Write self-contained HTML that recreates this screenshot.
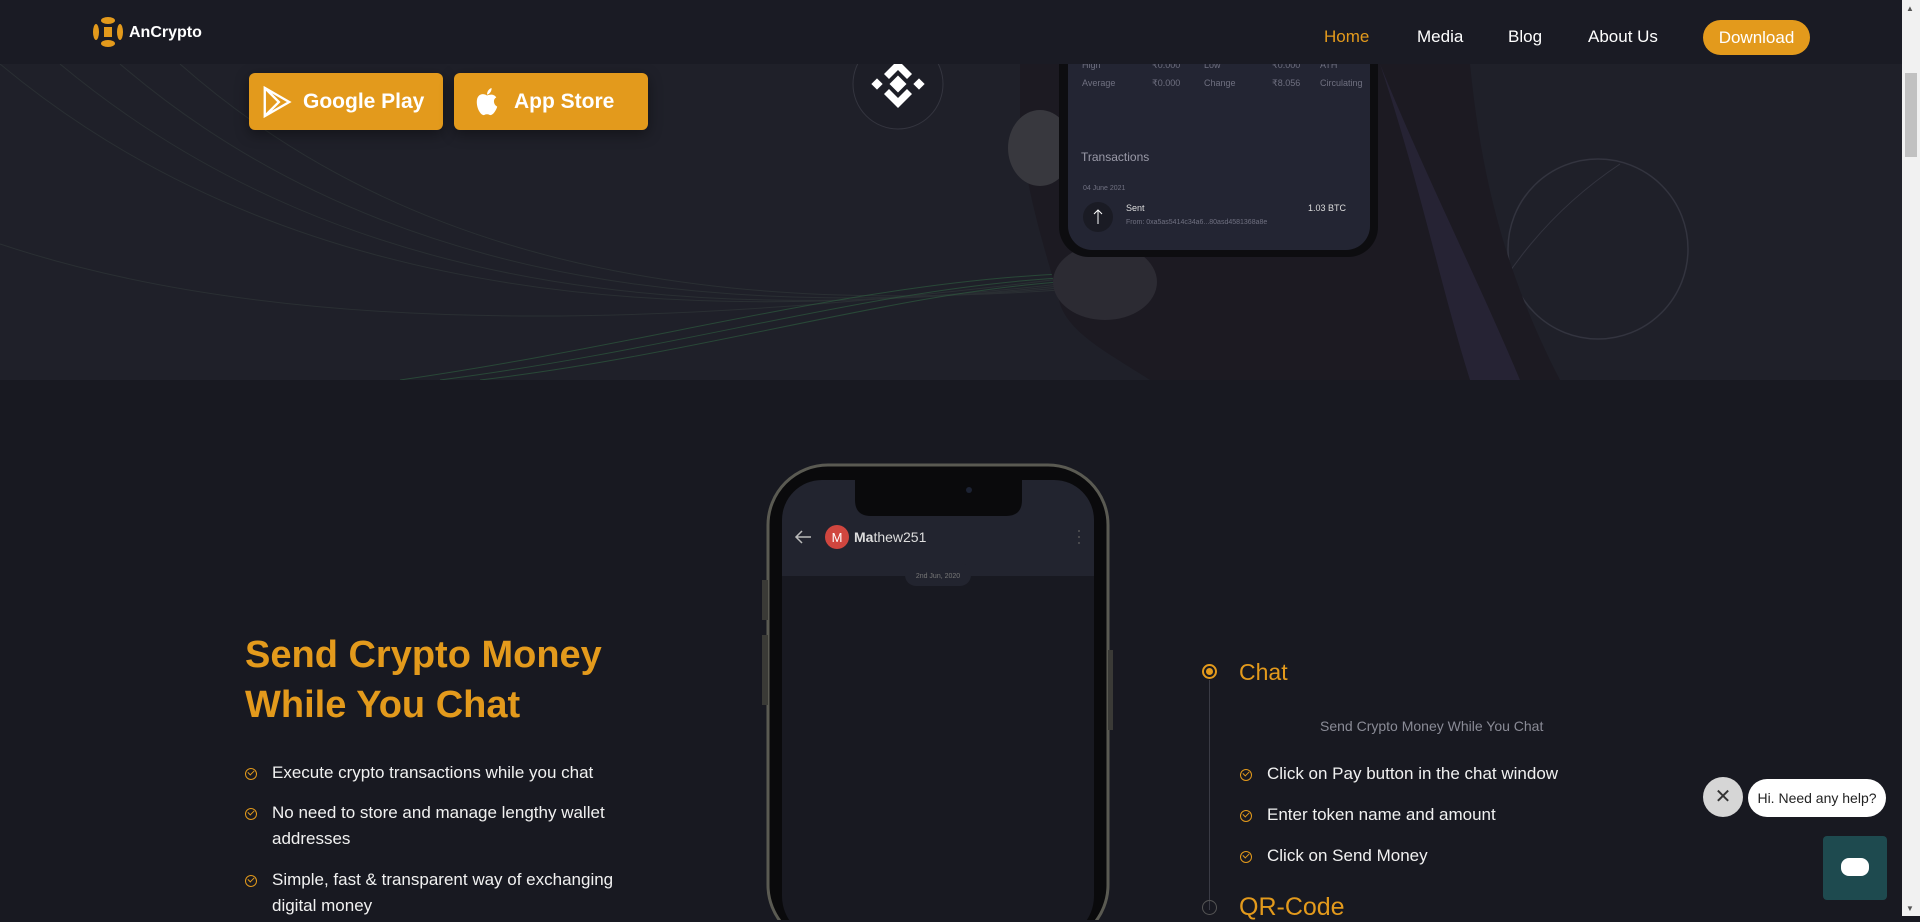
<!DOCTYPE html>
<html><head><meta charset="utf-8">
<style>
*{margin:0;padding:0;box-sizing:border-box}
html,body{width:1920px;height:916px;overflow:hidden;background:#181921;font-family:"Liberation Sans",sans-serif;color:#fff}
.abs{position:absolute}
#nav{position:absolute;left:0;top:0;width:1902px;height:64px;background:#1a1b24;z-index:5}
#hero{position:absolute;left:0;top:64px;width:1902px;height:316px;background:#1f2029;overflow:hidden}
.nl{position:absolute;top:27px;font-size:17px;color:#fff}
.btn{position:absolute;top:9px;height:57px;background:#e39a1c;border-radius:6px;box-shadow:0 4px 14px rgba(0,0,0,.4);font-size:21px;font-weight:bold;display:flex;align-items:center;padding-left:12px}
.li{position:absolute;font-size:17px;color:#f1f1f1;line-height:26px}
.chk{position:absolute;width:12px;height:12px;border:1.6px solid #e39a1c;border-radius:50%}
.chk:after{content:"";position:absolute;left:2px;top:1px;width:5px;height:3px;border-left:1.5px solid #e39a1c;border-bottom:1.5px solid #e39a1c;transform:rotate(-45deg)}
</style></head><body>
<div id="nav">
  <svg class="abs" style="left:93px;top:17px" width="30" height="30" viewBox="0 0 30 30">
    <ellipse cx="15" cy="3.5" rx="7" ry="3.5" fill="#e39a1c"/><ellipse cx="15" cy="26.5" rx="7" ry="3.5" fill="#e39a1c"/>
    <ellipse cx="3" cy="15" rx="3" ry="8" fill="#e39a1c"/><ellipse cx="27" cy="15" rx="3" ry="8" fill="#e39a1c"/>
    <rect x="11" y="10" width="8" height="10" fill="#e39a1c"/></svg>
  <div class="abs" style="left:129px;top:24px;font-size:16px;font-weight:bold">AnCrypto</div>
  <div class="nl" style="left:1324px;color:#e39a1c">Home</div>
  <div class="nl" style="left:1417px">Media</div>
  <div class="nl" style="left:1508px">Blog</div>
  <div class="nl" style="left:1588px">About Us</div>
  <div class="abs" style="left:1703px;top:20px;width:107px;height:35px;border-radius:18px;background:#e39a1c;font-size:17px;text-align:center;line-height:35px">Download</div>
</div>
<div id="hero">
  <svg class="abs" style="left:0;top:0" width="1902" height="316">
    <g fill="none" stroke="#2a2f33" stroke-width="1">
      <path d="M0 0 C300 250 700 260 1060 220"/><path d="M60 0 C360 250 740 255 1060 222"/>
      <path d="M120 0 C400 240 760 250 1060 224"/><path d="M180 0 C440 230 780 245 1060 226"/>
      <path d="M0 180 C300 280 700 260 1060 215"/>
    </g>
    <g fill="none" stroke="#2d5a3e" stroke-width="1" opacity=".7">
      <path d="M400 316 C650 280 850 220 1060 210"/><path d="M440 316 C680 285 870 225 1060 214"/>
      <path d="M480 316 C700 290 890 230 1060 218"/>
    </g>
    <circle cx="1598" cy="185" r="90" fill="none" stroke="#33343f" stroke-width="1.5"/>
    <path d="M1190 0 C1170 100 1140 160 1100 190" stroke="#33343f" fill="none"/>
    <path d="M1450 316 C1500 200 1560 140 1620 100" stroke="#33343f" fill="none"/>
    <circle cx="898" cy="20" r="45" fill="#1d1e27" stroke="#34353f"/>
    <g fill="#fff" transform="translate(898,20)">
      <rect x="-6" y="-6" width="12" height="12" transform="rotate(45)"/>
      <rect x="-25" y="-4" width="8" height="8" transform="rotate(45 -21 0)"/>
      <rect x="17" y="-4" width="8" height="8" transform="rotate(45 21 0)"/>
      <path d="M-14 10 L0 24 L14 10 L9 5 L0 14 L-9 5Z"/><path d="M-14 -10 L0 -24 L14 -10 L9 -5 L0 -14 L-9 -5Z"/>
    </g>
    <path d="M1020 0 L1470 0 C1480 100 1500 200 1560 316 L1150 316 C1110 290 1070 270 1060 240 C1050 200 1025 130 1020 60Z" fill="#1c1a22"/>
    <path d="M1380 0 C1420 100 1480 220 1520 316 L1470 316 C1440 220 1420 120 1380 0Z" fill="#29263a" opacity=".8"/>
    <ellipse cx="1040" cy="84" rx="32" ry="38" fill="#38383e"/>
    <ellipse cx="1105" cy="218" rx="52" ry="38" fill="#2c2b33"/>
    <rect x="1059" y="-60" width="319" height="253" rx="30" fill="#0d0d10"/>
    <rect x="1068" y="-60" width="302" height="246" rx="24" fill="#232533"/>
    <g font-family="Liberation Sans" font-size="9" fill="#6f7080">
      <text x="1082" y="4">High</text><text x="1152" y="4">₹0.000</text><text x="1204" y="4">Low</text><text x="1272" y="4">₹0.000</text><text x="1320" y="4">ATH</text>
      <text x="1082" y="22">Average</text><text x="1152" y="22">₹0.000</text><text x="1204" y="22">Change</text><text x="1272" y="22">₹8.056</text><text x="1320" y="22">Circulating</text>
      <text x="1081" y="97" font-size="12" fill="#9a9aa8">Transactions</text>
      <text x="1083" y="126" font-size="7">04 June 2021</text>
      <text x="1126" y="147" fill="#ddd">Sent</text><text x="1308" y="147" fill="#ddd">1.03 BTC</text>
      <text x="1126" y="160" font-size="7">From: 0xa5as5414c34a6...80asd4581368a8e</text>
    </g>
    <circle cx="1098" cy="153" r="15" fill="#1a1b24"/>
    <path d="M1098 160 V146 M1094 150 L1098 146 L1102 150" stroke="#fff" fill="none"/>
  </svg>
  <div class="btn" style="left:249px;width:194px"><svg width="32" height="34" viewBox="0 0 34 34" style="margin-right:10px"><path d="M4 2 L30 17 L4 32Z M4 2 L19 17 L4 32" fill="none" stroke="#fff" stroke-width="2.5"/></svg>Google Play</div>
  <div class="btn" style="left:454px;width:194px;padding-left:20px"><svg width="26" height="30" viewBox="0 0 28 32" style="margin-right:14px"><path d="M14 9 C10 6 3 7 3 16 C3 24 8 31 11 30 C13 29 15 29 17 30 C20 31 24 25 25 21 C21 19 20 13 24 11 C21 7 17 8 14 9Z M14 8 C14 4 17 1 19 1 C19 5 16 8 14 8Z" fill="#fff"/></svg>App Store</div>
</div>

<div class="abs" style="left:245px;top:630px;font-size:38px;font-weight:bold;color:#e39a1c;line-height:50px">Send Crypto Money<br>While You Chat</div>
<div class="chk" style="left:245px;top:768px"></div><div class="li" style="left:272px;top:760px">Execute crypto transactions while you chat</div>
<div class="chk" style="left:245px;top:808px"></div><div class="li" style="left:272px;top:800px">No need to store and manage lengthy wallet<br>addresses</div>
<div class="chk" style="left:245px;top:875px"></div><div class="li" style="left:272px;top:867px">Simple, fast &amp; transparent way of exchanging<br>digital money</div>

<svg class="abs" style="left:760px;top:460px" width="360" height="460">
  <rect x="8" y="5" width="340" height="480" rx="60" fill="#0a0a0c" stroke="#5a5a52" stroke-width="3"/>
  <rect x="2" y="120" width="6" height="40" fill="#3a3a36"/><rect x="2" y="175" width="6" height="70" fill="#3a3a36"/>
  <rect x="348" y="190" width="5" height="80" fill="#3a3a36"/>
  <rect x="22" y="20" width="312" height="460" rx="44" fill="#181921"/>
  <rect x="22" y="20" width="312" height="96" rx="40" fill="#22242f"/>
  <rect x="22" y="60" width="312" height="56" fill="#22242f"/>
  <path d="M95 20 H262 V40 Q262 56 246 56 H111 Q95 56 95 40Z" fill="#0a0a0c"/>
  <circle cx="209" cy="30" r="3" fill="#1c2233"/>
  <path d="M51 77 H36 M42 71 L36 77 L42 83" stroke="#bbb" stroke-width="1.5" fill="none"/>
  <circle cx="77" cy="77" r="12" fill="#d0463f"/>
  <text x="77" y="82" text-anchor="middle" font-family="Liberation Sans" font-size="13" fill="#fff">M</text>
  <text x="94" y="82" font-family="Liberation Sans" font-size="14" fill="#ddd"><tspan font-weight="bold">Ma</tspan>thew251</text>
  <g fill="#555"><circle cx="319" cy="71" r="1"/><circle cx="319" cy="77" r="1"/><circle cx="319" cy="83" r="1"/></g>
  <rect x="145" y="103" width="66" height="23" rx="11" fill="#22242f"/>
  <text x="178" y="118" text-anchor="middle" font-family="Liberation Sans" font-size="7" fill="#777">2nd Jun, 2020</text>
</svg>

<div class="abs" style="left:1209px;top:680px;width:1px;height:230px;background:#3a3b45"></div>
<div class="abs" style="left:1202px;top:664px;width:15px;height:15px;border:2px solid #e39a1c;border-radius:50%"><div style="margin:2px;width:7px;height:7px;border-radius:50%;background:#e39a1c"></div></div>
<div class="abs" style="left:1239px;top:659px;font-size:23px;color:#e39a1c">Chat</div>
<div class="abs" style="left:1320px;top:718px;font-size:14px;color:#8a8b96">Send Crypto Money While You Chat</div>
<div class="chk" style="left:1240px;top:769px"></div><div class="li" style="left:1267px;top:761px">Click on Pay button in the chat window</div>
<div class="chk" style="left:1240px;top:810px"></div><div class="li" style="left:1267px;top:802px">Enter token name and amount</div>
<div class="chk" style="left:1240px;top:851px"></div><div class="li" style="left:1267px;top:843px">Click on Send Money</div>
<div class="abs" style="left:1202px;top:900px;width:15px;height:15px;border:1.5px solid #555;border-radius:50%"></div>
<div class="abs" style="left:1239px;top:893px;font-size:25px;color:#e39a1c">QR-Code</div>

<div class="abs" style="left:1703px;top:777px;width:40px;height:40px;border-radius:50%;background:#d6d6d6;color:#333;font-size:20px;text-align:center;line-height:40px">✕</div>
<div class="abs" style="left:1748px;top:779px;width:138px;height:38px;border-radius:19px;background:#fff;color:#222;font-size:14px;line-height:38px;text-align:center">Hi. Need any help?</div>
<div class="abs" style="left:1823px;top:836px;width:64px;height:64px;background:#1e4a4f;border-radius:4px">
  <div style="position:absolute;left:18px;top:22px;width:28px;height:18px;background:#fff;border-radius:8px"></div>
</div>

<div class="abs" style="left:1902px;top:0;width:18px;height:916px;background:#f1f1f1"></div>
<div class="abs" style="left:1905px;top:73px;width:12px;height:84px;background:#c1c1c1"></div>
<div class="abs" style="left:1906px;top:4px;font-size:8px;color:#555">▲</div>
<div class="abs" style="left:1906px;top:904px;font-size:8px;color:#555">▼</div>
</body></html>
